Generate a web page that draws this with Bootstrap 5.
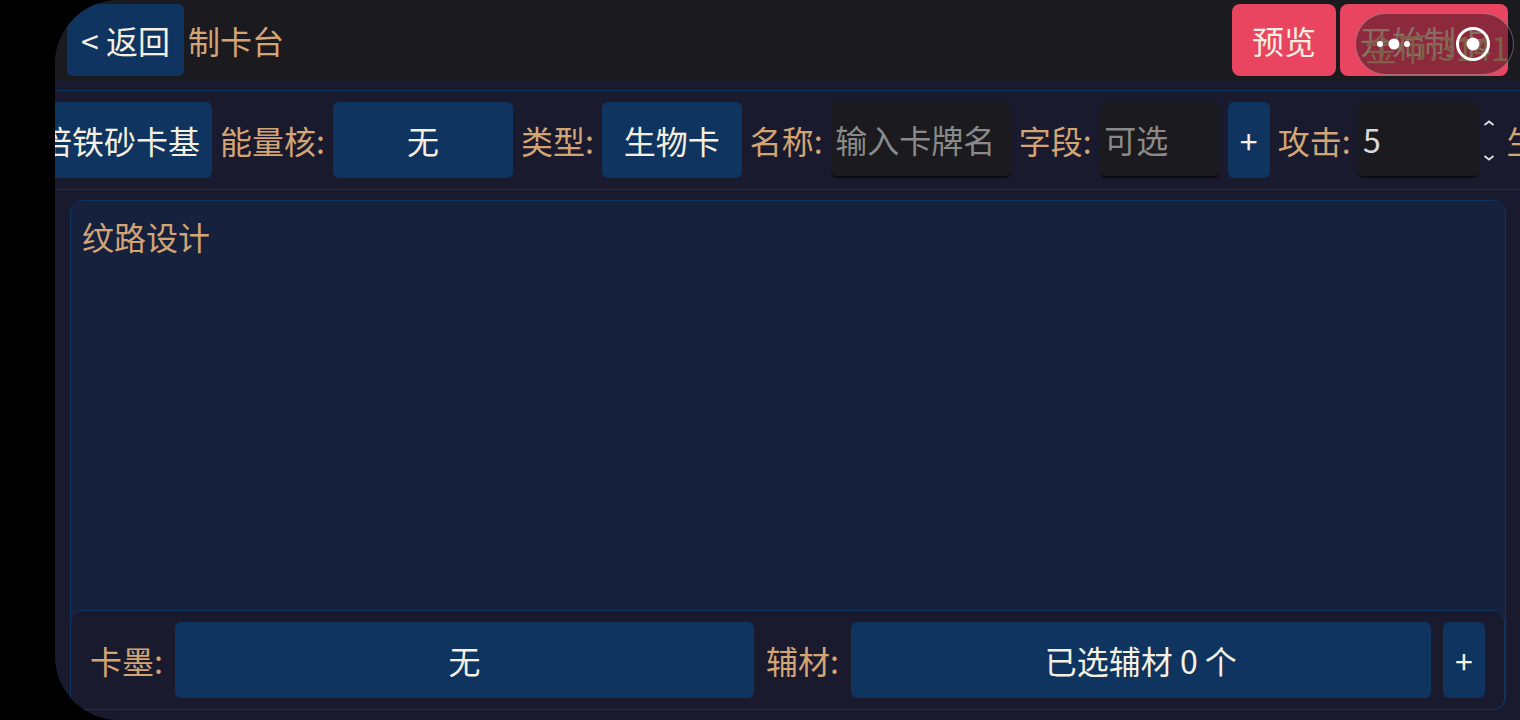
<!DOCTYPE html>
<html lang="zh-CN"><head><meta charset="utf-8"><title>制卡台</title>
<link rel="stylesheet" href="https://cdn.jsdelivr.net/npm/bootstrap@5.3.0/dist/css/bootstrap.min.css">
<style>
html,body{height:720px;overflow:hidden;background:#000}
body{font-family:"Noto Sans CJK SC","Noto Sans",sans-serif;font-size:32px;line-height:1.2}
.safe-strip{width:55px;flex:none;background:#000}
.app-shell{flex:1;min-width:0;height:720px;background:#1a1a2e;border-radius:64px 0 0 64px;overflow:hidden;position:relative}
.head-bar{height:80px;padding:4px 12px 4px 12px;background:#1a1a1f;flex:none}
.tool-strip{height:100px;margin-top:10px;border-top:1px solid #0f3460;border-bottom:1px solid #0f3460;overflow:hidden;white-space:nowrap;flex:none}
.tool-inner{margin-left:-59px;gap:8px;flex:none}
.btn-navy{background:#0f3460;color:#f5f0e1;border:0;border-radius:6px;height:76px;font-size:32px;line-height:1.2;padding:0;flex:none;display:flex;align-items:center;justify-content:center}
.btn-rose{background:#e94560;color:#f5f0e1;border:0;border-radius:8px;height:72px;font-size:32px;padding:0;flex:none}
.head-back{width:117px;height:72px}
.head-prev{width:104px}
.head-start{width:168px;color:#dcc0a4}
.tan-text{color:#d4a574;flex:none}
.field-dark{background:#1a1a1f;border-bottom:2px solid #0c0c10;border-radius:6px;height:76px;padding:0 4.5px;color:#8a8a8a;flex:none;display:flex;align-items:center}
.w-base{width:216px}.w-core{width:180px}.w-type{width:140px}.w-name{width:180px}.w-field{width:120px}.w-plus{width:42px}.w-num{width:121px;color:#d8d8d8;margin-left:-.5px;margin-right:.5px;padding-left:5px}
.spin-col{width:20px;flex:none;height:76px;margin-left:-9px}
.main-area{flex:1;min-height:0;padding:10px 14px 10px 15px;position:relative}
.pattern-box{height:100%;background:#16213e;border:1px solid #0f3460;border-radius:12px;padding:16px 11px;color:#d4a574}
.foot-box{position:absolute;left:15px;right:15px;bottom:10px;height:100px;background:#1a1a2e;border:1px solid #0f3460;border-radius:12px;padding:11px 19px;gap:12px}
.foot-ink{width:579px}.foot-mat{width:580px}
.coin-text{position:absolute;right:11px;top:28px;color:#d4a574;font-size:32px}
.capsule-wrap{position:absolute;top:13px;right:6px;width:159px;height:62px;border-radius:31px;background:rgba(20,5,15,.43);border:1px solid rgba(255,255,255,.3)}
</style></head><body class="d-flex">
<div class="safe-strip"></div>
<div class="app-shell d-flex flex-column">
 <div class="head-bar d-flex align-items-center">
  <button class="btn-navy head-back">&lt; 返回</button>
  <span class="tan-text ms-1">制卡台</span>
  <div class="ms-auto d-flex gap-1">
   <button class="btn-rose head-prev">预览</button>
   <button class="btn-rose head-start">开始制卡</button>
  </div>
 </div>
 <div class="tool-strip d-flex align-items-center">
  <div class="tool-inner d-flex align-items-center">
   <button class="btn-navy w-base">高倍铁砂卡基</button>
   <span class="tan-text">能量核:</span><button class="btn-navy w-core">无</button>
   <span class="tan-text">类型:</span><button class="btn-navy w-type">生物卡</button>
   <span class="tan-text">名称:</span><div class="field-dark w-name">输入卡牌名</div>
   <span class="tan-text">字段:</span><div class="field-dark w-field">可选</div>
   <button class="btn-navy w-plus">+</button>
   <span class="tan-text">攻击:</span><div class="field-dark w-num">5</div>
   <svg class="spin-col" viewBox="0 0 20 76" fill="none" stroke="#e0e0e0" stroke-width="1.800"><path d="M5.500 23l4.500-3.500 4.500 3.500M5.500 54l4.500 3.500 4.500-3.500"/></svg>
   <span class="tan-text">生命:</span>
  </div>
 </div>
 <div class="main-area">
  <div class="pattern-box">纹路设计</div>
  <div class="foot-box d-flex align-items-center">
   <span class="tan-text">卡墨:</span><button class="btn-navy foot-ink">无</button>
   <span class="tan-text">辅材:</span><button class="btn-navy foot-mat">已选辅材 0 个</button>
   <button class="btn-navy w-plus">+</button>
  </div>
 </div>
 <span class="coin-text">金币:3141</span>
 <div class="capsule-wrap d-flex align-items-center">
  <svg width="157" height="60" viewBox="0 0 157 60"><g fill="#fff"><circle cx="24" cy="30" r="3"/><circle cx="38" cy="30" r="5.500"/><circle cx="51" cy="30" r="3"/><circle cx="117" cy="30" r="6.500"/></g><circle cx="117" cy="30" r="15.500" fill="none" stroke="#fff" stroke-width="3"/></svg>
 </div>
</div>
</body></html>
